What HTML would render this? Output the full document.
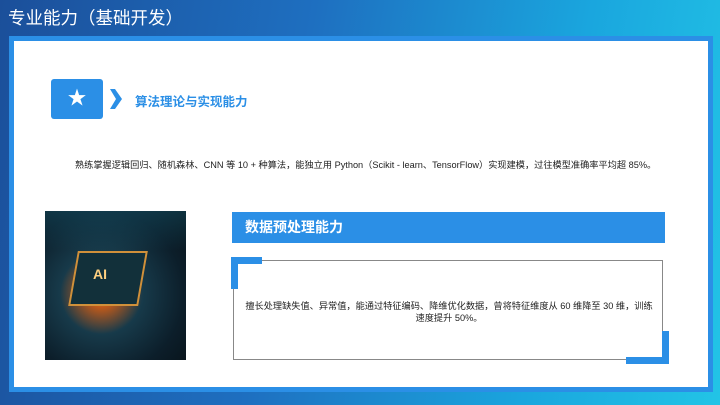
<!DOCTYPE html>
<html><head><meta charset="utf-8"><style>
*{margin:0;padding:0;box-sizing:border-box}
body{width:720px;height:405px;overflow:hidden;position:relative;font-family:"Liberation Sans","Noto Sans CJK SC",sans-serif;
background:linear-gradient(100deg,#1b4f9a 0%,#1e6fc0 40%,#1aa6de 75%,#22c4e6 100%);}
.title{position:absolute;left:8px;top:5px;color:#fff;font-size:17.5px;}
.panel{position:absolute;left:9px;top:36px;width:704px;height:356px;background:#fff;border:5px solid #2b8fe6;}
.abs{position:absolute}
</style></head><body>
<div class="title">专业能力（基础开发）</div>
<div class="panel"></div>
<div class="abs" style="left:51px;top:79px;width:52px;height:40px;background:#2b8fe6;border-radius:3px;color:#fff;font-size:19px;text-align:center;line-height:40px">★</div>
<svg class="abs" style="left:109px;top:89px" width="14" height="20" viewBox="0 0 14 20"><path d="M1 0 H6 L13 10 L6 20 H1 L7 10Z" fill="#2b8fe6"/></svg>
<div class="abs" style="left:135px;top:91px;color:#2b8fe6;font-size:12.5px;font-weight:bold">算法理论与实现能力</div>
<div class="abs" style="left:75px;top:157px;color:#222;font-size:9.2px;white-space:nowrap">熟练掌握逻辑回归、随机森林、CNN 等 10 + 种算法，能独立用 Python（Scikit - learn、TensorFlow）实现建模，过往模型准确率平均超 85%。</div>
<div class="abs" style="left:45px;top:211px;width:141px;height:149px;background:radial-gradient(circle at 40% 55%,#ffb050 0%,#c05a1a 12%,#173a4a 35%,#0c1e2a 70%,#081218 100%);overflow:hidden">
<div class="abs" style="left:28px;top:40px;width:70px;height:55px;border:2px solid #d0903a;background:#12303a;transform:skewX(-10deg)"></div>
<div class="abs" style="left:48px;top:55px;color:#ffd080;font-weight:bold;font-size:14px">AI</div>
<div class="abs" style="left:0;top:0;width:141px;height:40px;background:linear-gradient(#1a6f8a55,transparent)"></div>
</div>
<div class="abs" style="left:232px;top:212px;width:433px;height:31px;background:#2b8fe6;color:#fff;font-weight:bold;font-size:14px;line-height:31px;padding-left:13px">数据预处理能力</div>
<div class="abs" style="left:233px;top:260px;width:430px;height:100px;border:1px solid #888"></div>
<div class="abs" style="left:231px;top:257px;width:31px;height:7px;background:#2b8fe6"></div>
<div class="abs" style="left:231px;top:257px;width:7px;height:32px;background:#2b8fe6"></div>
<div class="abs" style="left:626px;top:357px;width:43px;height:7px;background:#2b8fe6"></div>
<div class="abs" style="left:662px;top:331px;width:7px;height:33px;background:#2b8fe6"></div>
<div class="abs" style="left:245px;top:300px;width:408px;color:#222;font-size:9.2px;text-align:center;line-height:12px">擅长处理缺失值、异常值，能通过特征编码、降维优化数据，曾将特征维度从 60 维降至 30 维，训练速度提升 50%。</div>
</body></html>
